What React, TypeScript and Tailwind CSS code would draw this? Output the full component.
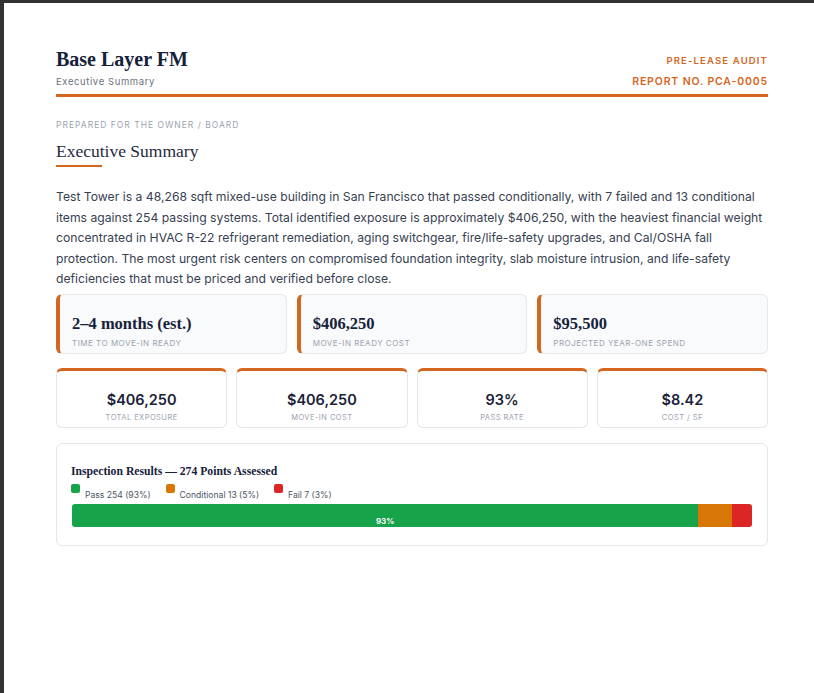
const serif = "[font-family:'Liberation_Serif',serif]";

const topCards = [
  { value: "2–4 months (est.)", label: "TIME TO MOVE-IN READY" },
  { value: "$406,250", label: "MOVE-IN READY COST" },
  { value: "$95,500", label: "PROJECTED YEAR-ONE SPEND" },
];

const stats = [
  { value: "$406,250", label: "TOTAL EXPOSURE" },
  { value: "$406,250", label: "MOVE-IN COST" },
  { value: "93%", label: "PASS RATE" },
  { value: "$8.42", label: "COST / SF" },
];

const legend = [
  { color: "bg-[#16a34a]", text: "Pass 254 (93%)" },
  { color: "bg-[#d97706]", text: "Conditional 13 (5%)" },
  { color: "bg-[#dc2626]", text: "Fail 7 (3%)" },
];

export default function App() {
  return (
    <div className="h-[693px] overflow-hidden border-l-[4px] border-t-[3px] border-[#333333] bg-white pl-[52px] pr-[46px] pt-[44px] font-['Inter',sans-serif] text-[#1a2238]">
      <header className="flex items-start justify-between border-b-[3px] border-[#d4661f] pb-[6px]">
        <div>
          <h1 className={`${serif} h-[24px] text-[20px] font-bold leading-[24px] text-[#16213a]`}>Base Layer FM</h1>
          <p className="mt-[4px] h-[13px] text-[9.5px] leading-[14px] tracking-[0.6px] text-[#6b7280]">Executive Summary</p>
        </div>
        <div className="text-right text-[#d4661f]">
          <p className="h-[25px] pt-[3px] text-[9.5px] font-semibold leading-[22px] tracking-[1.15px]">PRE-LEASE AUDIT</p>
          <p className="mt-[1px] h-[14px] text-[10.5px] font-semibold leading-[18px] tracking-[0.85px]">REPORT NO. PCA-0005</p>
        </div>
      </header>

      <p className="mt-[22px] text-[8.5px] leading-[12px] tracking-[1px] text-[#9ca3af]">PREPARED FOR THE OWNER / BOARD</p>
      <h2 className={`${serif} mt-[9px] text-[17.5px] leading-[22px] text-[#1f2a40]`}>Executive Summary</h2>
      <div className="mt-[3px] h-[2px] w-[46px] bg-[#d4661f]" />

      <p className="mt-[20px] text-[12.2px] leading-[20.6px] text-[#374151]">
        Test Tower is a 48,268 sqft mixed-use building in San Francisco that passed conditionally, with 7 failed and 13 conditional items against 254 passing systems. Total identified exposure is approximately $406,250, with the heaviest financial weight concentrated in HVAC R-22 refrigerant remediation, aging switchgear, fire/life-safety upgrades, and Cal/OSHA fall protection. The most urgent risk centers on compromised foundation integrity, slab moisture intrusion, and life-safety deficiencies that must be priced and verified before close.
      </p>

      <div className="mt-[4px] grid grid-cols-3 gap-[10px]">
        {topCards.map((c) => (
          <div key={c.label} className="h-[60px] rounded-[6px] border border-[#e5e7eb] border-l-[4px] border-l-[#d4661f] bg-[#f8fafc] pl-[12px] pt-[19px]">
            <div className={`${serif} text-[16.5px] font-bold leading-[20px] text-[#16213a]`}>{c.value}</div>
            <div className="mt-[3px] text-[8px] leading-[12px] tracking-[0.5px] text-[#9ca3af]">{c.label}</div>
          </div>
        ))}
      </div>

      <div className="mt-[14px] grid grid-cols-4 gap-[9px]">
        {stats.map((s) => (
          <div key={s.label} className="h-[60px] rounded-[6px] border border-[#e5e7eb] border-t-[3px] border-t-[#d4661f] bg-white pt-[20px] text-center">
            <div className="text-[14.5px] font-semibold leading-[18px] text-[#1a2238]">{s.value}</div>
            <div className="mt-[3px] text-[7.5px] leading-[12px] tracking-[0.45px] text-[#9ca3af]">{s.label}</div>
          </div>
        ))}
      </div>

      <section className="mt-[15px] h-[103px] rounded-[6px] border border-[#e5e7eb] bg-white px-[15px] pt-[20px]">
        <h3 className={`${serif} -ml-[1px] text-[11.7px] font-bold leading-[16px] text-[#16213a]`}>Inspection Results — 274 Points Assessed</h3>
        <div className="mt-[4px] -ml-[1px] flex h-[16px] gap-[15px]">
          {legend.map((l) => (
            <div key={l.text} className="flex items-start gap-[5px]">
              <span className={`h-[9px] w-[9px] rounded-[2px] ${l.color}`} />
              <span className="pt-[5px] text-[8.6px] leading-[12px] text-[#4b5563]">{l.text}</span>
            </div>
          ))}
        </div>
        <div className="mt-[4px] flex h-[23px] overflow-hidden rounded-[3px]">
          <div className="flex w-[92.1%] items-end justify-center bg-[#16a34a] text-[8px] font-bold leading-[11px] text-white">93%</div>
          <div className="w-[5%] bg-[#d97706]" />
          <div className="w-[2.9%] bg-[#dc2626]" />
        </div>
      </section>
    </div>
  );
}
